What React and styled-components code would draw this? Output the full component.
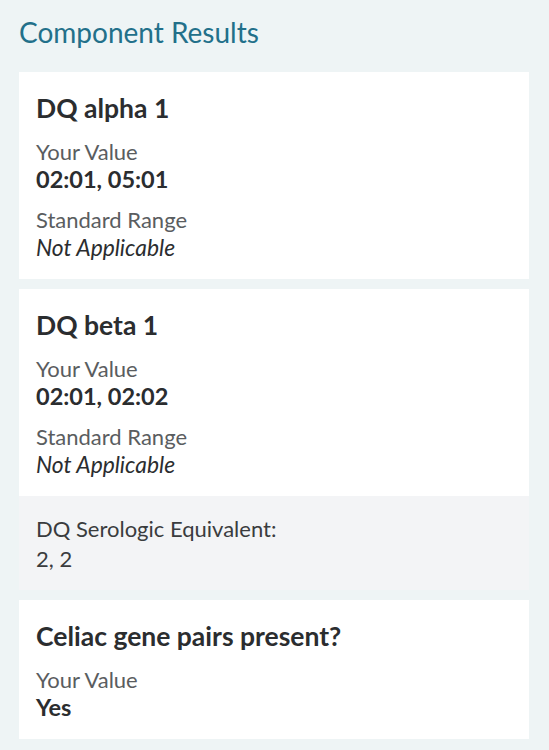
import React from 'react';
import styled, { createGlobalStyle } from 'styled-components';

const GlobalStyle = createGlobalStyle`
  html, body {
    margin: 0;
    padding: 0;
    background: #eef4f5;
  }
  body {
    font-family: Lato, "Noto Sans", sans-serif;
    color: #2d2f31;
  }
`;

const Page = styled.div`
  padding: 14px 20px 10px 19px;
  display: flex;
  flex-direction: column;
`;

const Heading = styled.h2`
  margin: 0 0 22px;
  font-size: 28px;
  line-height: 36px;
  font-weight: 400;
  color: #22708a;
`;

const CardList = styled.div`
  display: flex;
  flex-direction: column;
  gap: 10px;
`;

const Card = styled.section`
  background: #fff;
  display: flex;
  flex-direction: column;
`;

const CardBody = styled.div`
  padding: 20px 17px 18px;
  display: flex;
  flex-direction: column;
`;

const CardTitle = styled.h3`
  margin: 0 0 14px;
  font-size: 26.5px;
  line-height: 32px;
  font-weight: 700;
  color: #2b2d2f;
`;

const Field = styled.div`
  display: flex;
  flex-direction: column;
  & + & {
    margin-top: 13px;
  }
`;

const Label = styled.span`
  font-size: 22px;
  line-height: 27px;
  color: #5a5d60;
`;

const Value = styled.span`
  font-size: ${p => (p.$italic ? '22.8px' : '23.5px')};
  line-height: 28px;
  font-weight: ${p => (p.$italic ? 400 : 700)};
  font-style: ${p => (p.$italic ? 'italic' : 'normal')};
  color: #2b2d2f;
`;

const Footer = styled.div`
  background: #f3f4f6;
  padding: 18px 17px 16px;
  display: flex;
  flex-direction: column;
  font-size: 22px;
  line-height: 30px;
  color: #3a3c3e;
`;

const results = [
  {
    name: 'DQ alpha 1',
    value: '02:01, 05:01',
    range: 'Not Applicable',
  },
  {
    name: 'DQ beta 1',
    value: '02:01, 02:02',
    range: 'Not Applicable',
    footer: { label: 'DQ Serologic Equivalent:', value: '2, 2' },
  },
  {
    name: 'Celiac gene pairs present?',
    value: 'Yes',
  },
];

const App = () => (
  <>
    <GlobalStyle />
    <Page>
      <Heading>Component Results</Heading>
      <CardList>
        {results.map(r => (
          <Card key={r.name}>
            <CardBody>
              <CardTitle>{r.name}</CardTitle>
              <Field>
                <Label>Your Value</Label>
                <Value>{r.value}</Value>
              </Field>
              {r.range && (
                <Field>
                  <Label>Standard Range</Label>
                  <Value $italic>{r.range}</Value>
                </Field>
              )}
            </CardBody>
            {r.footer && (
              <Footer>
                <span>{r.footer.label}</span>
                <span>{r.footer.value}</span>
              </Footer>
            )}
          </Card>
        ))}
      </CardList>
    </Page>
  </>
);

export default App;
